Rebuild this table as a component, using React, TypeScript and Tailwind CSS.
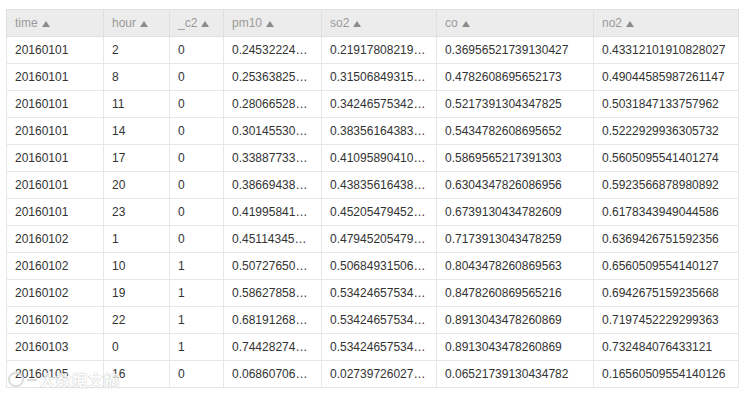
import React from 'react';

const columns = [
  { key: 'time', w: 'w-[97px]' },
  { key: 'hour', w: 'w-[66px]' },
  { key: '_c2', w: 'w-[54px]' },
  { key: 'pm10', w: 'w-[98px]' },
  { key: 'so2', w: 'w-[115px]' },
  { key: 'co', w: 'w-[157px]' },
  { key: 'no2', w: 'w-[145px]' },
];

// pm10 / so2 are shown clipped, as the grid does
const rows: string[][] = [
  ['20160101', '2', '0', '0.24532224…', '0.21917808219…', '0.36956521739130427', '0.43312101910828027'],
  ['20160101', '8', '0', '0.25363825…', '0.31506849315…', '0.4782608695652173', '0.49044585987261147'],
  ['20160101', '11', '0', '0.28066528…', '0.34246575342…', '0.5217391304347825', '0.5031847133757962'],
  ['20160101', '14', '0', '0.30145530…', '0.38356164383…', '0.5434782608695652', '0.5222929936305732'],
  ['20160101', '17', '0', '0.33887733…', '0.41095890410…', '0.5869565217391303', '0.5605095541401274'],
  ['20160101', '20', '0', '0.38669438…', '0.43835616438…', '0.6304347826086956', '0.5923566878980892'],
  ['20160101', '23', '0', '0.41995841…', '0.45205479452…', '0.6739130434782609', '0.6178343949044586'],
  ['20160102', '1', '0', '0.45114345…', '0.47945205479…', '0.7173913043478259', '0.6369426751592356'],
  ['20160102', '10', '1', '0.50727650…', '0.50684931506…', '0.8043478260869563', '0.6560509554140127'],
  ['20160102', '19', '1', '0.58627858…', '0.53424657534…', '0.8478260869565216', '0.6942675159235668'],
  ['20160102', '22', '1', '0.68191268…', '0.53424657534…', '0.8913043478260869', '0.7197452229299363'],
  ['20160103', '0', '1', '0.74428274…', '0.53424657534…', '0.8913043478260869', '0.732484076433121'],
  ['20160105', '16', '0', '0.06860706…', '0.02739726027…', '0.06521739130434782', '0.16560509554140126'],
];

const SortUp = () => (
  <svg width="8" height="6" viewBox="0 0 8 6" className="ml-[4px] inline-block">
    <path d="M4 0 L8 6 L0 6 Z" fill="#8c8c8c" />
  </svg>
);

export default function App() {
  return (
    <div className="relative w-[748px] h-[395px] bg-white overflow-hidden font-['Liberation_Sans',Arial,sans-serif]">
      <div className="pt-[9px] pl-[6px]">
        <table className="table-fixed border-collapse w-[732px] text-[12px]">
          <colgroup>
            {columns.map((c) => (
              <col key={c.key} className={c.w} />
            ))}
          </colgroup>
          <thead>
            <tr className="bg-[#ececec] h-[27px]">
              {columns.map((c) => (
                <th
                  key={c.key}
                  className="border border-[#e0e0e0] px-[8px] text-left font-normal text-[#9a9a9a] whitespace-nowrap"
                >
                  {c.key}
                  <SortUp />
                </th>
              ))}
            </tr>
          </thead>
          <tbody>
            {rows.map((r, i) => (
              <tr key={i} className="h-[27px]">
                {r.map((v, j) => (
                  <td
                    key={j}
                    className="border border-[#e6e6e6] px-[8px] text-[#333333] whitespace-nowrap"
                  >
                    {v}
                  </td>
                ))}
              </tr>
            ))}
          </tbody>
        </table>
      </div>

      {/* watermark */}
      <div className="absolute left-[8px] top-[372px] flex items-center gap-[3px] opacity-80 pointer-events-none">
        <div className="w-[16px] h-[15px] rounded-full border-[2px] border-[#d4d4d4]" />
        <div className="w-[10px] h-[2px] bg-[#d4d4d4]" />
        <span className="text-[15px] leading-none text-white font-bold tracking-[1px] [text-shadow:0_0_1px_#b0b0b0,0_0_1px_#b0b0b0] font-['Noto_Sans_CJK_SC',sans-serif]">
          大数据文摘
        </span>
      </div>
    </div>
  );
}
